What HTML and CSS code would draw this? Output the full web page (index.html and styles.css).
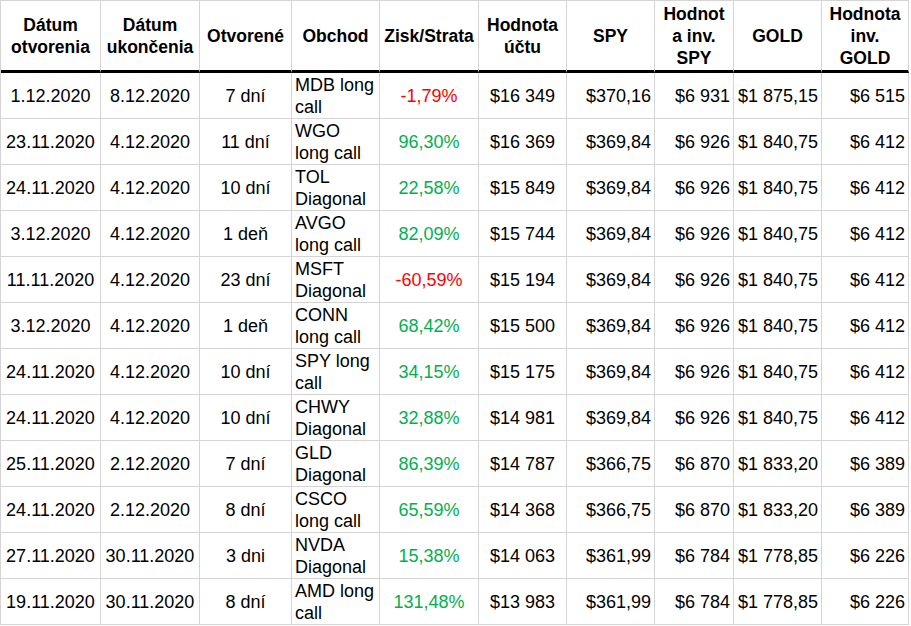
FILE: index.html
```html
<!DOCTYPE html>
<html lang="sk">
<head>
<meta charset="utf-8">
<title>Obchody</title>
<link rel="stylesheet" href="styles.css">
</head>
<body>
<table class="sheet">
  <colgroup>
    <col class="w100"><col class="w99"><col class="w92"><col class="w88"><col class="w99">
    <col class="w88"><col class="w88"><col class="w79"><col class="w88"><col class="w87">
  </colgroup>
  <thead>
    <tr>
      <th>Dátum<br>otvorenia</th>
      <th>Dátum<br>ukončenia</th>
      <th>Otvorené</th>
      <th>Obchod</th>
      <th>Zisk/Strata</th>
      <th>Hodnota<br>účtu</th>
      <th>SPY</th>
      <th>Hodnot<br>a inv.<br>SPY</th>
      <th>GOLD</th>
      <th>Hodnota<br>inv.<br>GOLD</th>
    </tr>
  </thead>
  <tbody>
    <tr><td class="c">1.12.2020</td><td class="c">8.12.2020</td><td class="c">7 dní</td><td class="l">MDB long<br>call</td><td class="c loss">-1,79%</td><td class="c">$16 349</td><td class="r">$370,16</td><td class="r">$6 931</td><td class="r">$1 875,15</td><td class="r">$6 515</td></tr>
    <tr><td class="c">23.11.2020</td><td class="c">4.12.2020</td><td class="c">11 dní</td><td class="l">WGO<br>long call</td><td class="c gain">96,30%</td><td class="c">$16 369</td><td class="r">$369,84</td><td class="r">$6 926</td><td class="r">$1 840,75</td><td class="r">$6 412</td></tr>
    <tr><td class="c">24.11.2020</td><td class="c">4.12.2020</td><td class="c">10 dní</td><td class="l">TOL<br>Diagonal</td><td class="c gain">22,58%</td><td class="c">$15 849</td><td class="r">$369,84</td><td class="r">$6 926</td><td class="r">$1 840,75</td><td class="r">$6 412</td></tr>
    <tr><td class="c">3.12.2020</td><td class="c">4.12.2020</td><td class="c">1 deň</td><td class="l">AVGO<br>long call</td><td class="c gain">82,09%</td><td class="c">$15 744</td><td class="r">$369,84</td><td class="r">$6 926</td><td class="r">$1 840,75</td><td class="r">$6 412</td></tr>
    <tr><td class="c">11.11.2020</td><td class="c">4.12.2020</td><td class="c">23 dní</td><td class="l">MSFT<br>Diagonal</td><td class="c loss">-60,59%</td><td class="c">$15 194</td><td class="r">$369,84</td><td class="r">$6 926</td><td class="r">$1 840,75</td><td class="r">$6 412</td></tr>
    <tr><td class="c">3.12.2020</td><td class="c">4.12.2020</td><td class="c">1 deň</td><td class="l">CONN<br>long call</td><td class="c gain">68,42%</td><td class="c">$15 500</td><td class="r">$369,84</td><td class="r">$6 926</td><td class="r">$1 840,75</td><td class="r">$6 412</td></tr>
    <tr><td class="c">24.11.2020</td><td class="c">4.12.2020</td><td class="c">10 dní</td><td class="l">SPY long<br>call</td><td class="c gain">34,15%</td><td class="c">$15 175</td><td class="r">$369,84</td><td class="r">$6 926</td><td class="r">$1 840,75</td><td class="r">$6 412</td></tr>
    <tr><td class="c">24.11.2020</td><td class="c">4.12.2020</td><td class="c">10 dní</td><td class="l">CHWY<br>Diagonal</td><td class="c gain">32,88%</td><td class="c">$14 981</td><td class="r">$369,84</td><td class="r">$6 926</td><td class="r">$1 840,75</td><td class="r">$6 412</td></tr>
    <tr><td class="c">25.11.2020</td><td class="c">2.12.2020</td><td class="c">7 dní</td><td class="l">GLD<br>Diagonal</td><td class="c gain">86,39%</td><td class="c">$14 787</td><td class="r">$366,75</td><td class="r">$6 870</td><td class="r">$1 833,20</td><td class="r">$6 389</td></tr>
    <tr><td class="c">24.11.2020</td><td class="c">2.12.2020</td><td class="c">8 dní</td><td class="l">CSCO<br>long call</td><td class="c gain">65,59%</td><td class="c">$14 368</td><td class="r">$366,75</td><td class="r">$6 870</td><td class="r">$1 833,20</td><td class="r">$6 389</td></tr>
    <tr><td class="c">27.11.2020</td><td class="c">30.11.2020</td><td class="c">3 dni</td><td class="l">NVDA<br>Diagonal</td><td class="c gain">15,38%</td><td class="c">$14 063</td><td class="r">$361,99</td><td class="r">$6 784</td><td class="r">$1 778,85</td><td class="r">$6 226</td></tr>
    <tr><td class="c">19.11.2020</td><td class="c">30.11.2020</td><td class="c">8 dní</td><td class="l">AMD long<br>call</td><td class="c gain">131,48%</td><td class="c">$13 983</td><td class="r">$361,99</td><td class="r">$6 784</td><td class="r">$1 778,85</td><td class="r">$6 226</td></tr>
  </tbody>
</table>
</body>
</html>
```
FILE: styles.css
```css
html, body {
  margin: 0;
  padding: 0;
  background: #ffffff;
}

.sheet {
  table-layout: fixed;
  width: 909px;
  border-collapse: separate;
  border-spacing: 0;
  border-top: 1px solid #d4d4d4;
  border-left: 1px solid #d4d4d4;
  font-family: "Liberation Sans", Arial, sans-serif;
  font-size: 18px;
  line-height: 22px;
  color: #000000;
}

.w100 { width: 100px; }
.w99 { width: 99px; }
.w92 { width: 92px; }
.w88 { width: 88px; }
.w87 { width: 87px; }
.w79 { width: 79px; }

.sheet th,
.sheet td {
  box-sizing: border-box;
  padding: 0;
  border-right: 1px solid #d4d4d4;
  border-bottom: 1px solid #d4d4d4;
  vertical-align: middle;
  white-space: nowrap;
  overflow: hidden;
}

.sheet th {
  height: 72px;
  font-size: 17.5px;
  font-weight: bold;
  text-align: center;
  border-bottom: 3px solid #000000;
}

.sheet td {
  height: 46px;
}

.c { text-align: center; }
.r { text-align: right; padding-right: 3px !important; }
.l { text-align: left; padding-left: 3px !important; }

.loss { color: #ff0000; }
.gain { color: #00b050; }
```
